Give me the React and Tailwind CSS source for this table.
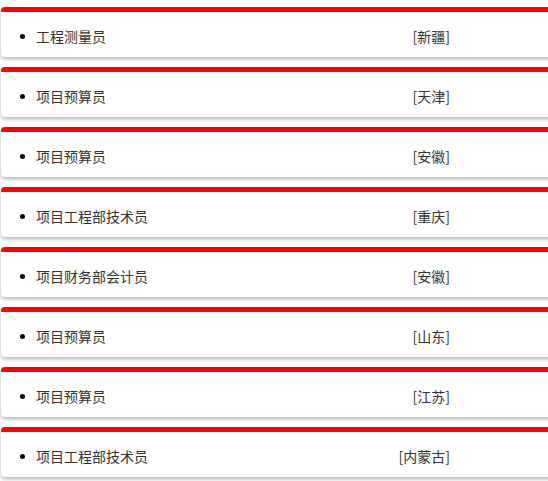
const jobs = [
  { title: "工程测量员", area: "新疆" },
  { title: "项目预算员", area: "天津" },
  { title: "项目预算员", area: "安徽" },
  { title: "项目工程部技术员", area: "重庆" },
  { title: "项目财务部会计员", area: "安徽" },
  { title: "项目预算员", area: "山东" },
  { title: "项目预算员", area: "江苏" },
  { title: "项目工程部技术员", area: "内蒙古" },
];

const App = () => {
  return (
    <div
      className="w-[548px] h-[481px] overflow-hidden bg-white pt-[7px] pl-[1px]"
      style={{ fontFamily: '"Noto Sans CJK SC", "Noto Sans", sans-serif' }}
    >
      <div className="flex flex-col gap-[10px] w-[560px]">
        {jobs.map((job, i) => (
          <div
            key={i}
            className="h-[50px] rounded-[4px] border-t-[5px] border-[#ff0000] bg-white shadow-[0_2px_4px_rgba(0,0,0,0.3)]"
          >
            <div className="flex items-center h-[45px] pt-[3px] pl-[19px] pr-[111px] text-[14px] text-[#333]">
              <span className="w-[5px] h-[5px] rounded-full bg-black mr-[11px]" />
              <span className="flex-1">{job.title}</span>
              <span>[{job.area}]</span>
            </div>
          </div>
        ))}
      </div>
    </div>
  );
};

export default App;
